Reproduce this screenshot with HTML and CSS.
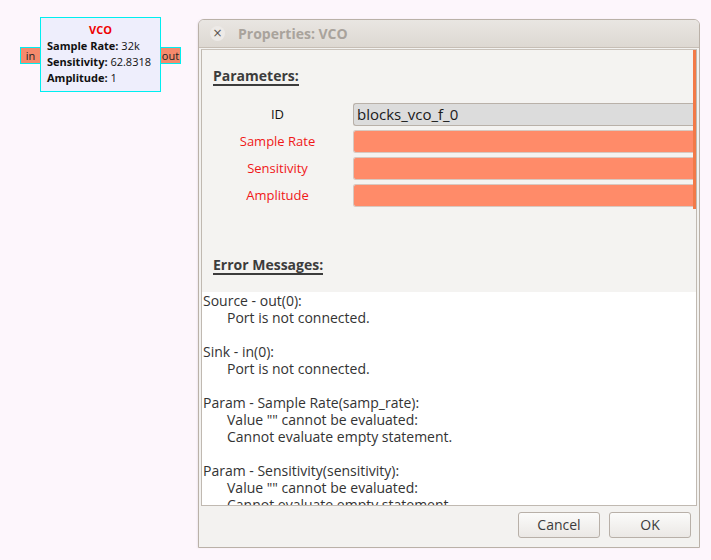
FILE: index.html
```html
<!DOCTYPE html>
<html>
<head>
<meta charset="utf-8">
<link rel="stylesheet" href="styles.css">
</head>
<body>
<div class="canvas">
  <div class="block">
    <div class="port port-in">in</div>
    <div class="block-title">VCO</div>
    <div class="block-line"><b>Sample Rate:</b> 32k</div>
    <div class="block-line"><b>Sensitivity:</b> 62.8318</div>
    <div class="block-line"><b>Amplitude:</b> 1</div>
    <div class="port port-out">out</div>
  </div>

  <div class="dialog">
    <div class="titlebar">
      <span class="close">×</span>
      <span class="title">Properties: VCO</span>
    </div>
    <div class="frame">
      <div class="params">
        <div class="scrollmark"></div>
        <div class="heading"><span>Parameters:</span></div>
        <div class="rows">
          <div class="label">ID</div>
          <div class="entry entry-id">blocks_vco_f_0</div>
          <div class="label err">Sample Rate</div>
          <div class="entry entry-err"></div>
          <div class="label err">Sensitivity</div>
          <div class="entry entry-err"></div>
          <div class="label err">Amplitude</div>
          <div class="entry entry-err"></div>
        </div>
        <div class="heading heading-err"><span>Error Messages:</span></div>
      </div>
      <div class="messages">
        <div class="msg">Source - out(0):</div>
        <div class="msg ind">Port is not connected.</div>
        <div class="msg blank"></div>
        <div class="msg">Sink - in(0):</div>
        <div class="msg ind">Port is not connected.</div>
        <div class="msg blank"></div>
        <div class="msg">Param - Sample Rate(samp_rate):</div>
        <div class="msg ind">Value "" cannot be evaluated:</div>
        <div class="msg ind">Cannot evaluate empty statement.</div>
        <div class="msg blank"></div>
        <div class="msg">Param - Sensitivity(sensitivity):</div>
        <div class="msg ind">Value "" cannot be evaluated:</div>
        <div class="msg ind">Cannot evaluate empty statement.</div>
      </div>
    </div>
    <div class="buttons">
      <div class="btn">Cancel</div>
      <div class="btn">OK</div>
    </div>
  </div>
</div>
</body>
</html>
```

FILE: styles.css
```css
html, body {
  margin: 0;
  padding: 0;
}
body {
  background: #fdf6fc;
  width: 711px;
  height: 560px;
  overflow: hidden;
  font-family: "Open Sans", "Liberation Sans", sans-serif;
}
.canvas {
  position: relative;
  width: 711px;
  height: 560px;
}

/* flow-graph block */
.block {
  position: absolute;
  left: 40px;
  top: 17px;
  width: 121px;
  height: 75px;
  box-sizing: border-box;
  border: 1px solid #00eef0;
  background: #eeeefc;
  padding: 3px 0 0 6px;
  font-size: 11px;
  color: #111;
}
.block-title {
  color: #ee0000;
  font-weight: bold;
  text-align: center;
  line-height: 17px;
  padding-right: 6px;
}
.block-line {
  line-height: 16px;
  white-space: nowrap;
}
.block-line b {
  font-weight: bold;
}
.port {
  position: absolute;
  top: 29px;
  height: 17px;
  box-sizing: border-box;
  border: 1px solid #00eef0;
  background: #f58a6c;
  font-size: 11px;
  line-height: 15px;
  color: #222;
  text-align: center;
}
.port-in {
  left: -21px;
  width: 21px;
}
.port-out {
  right: -21px;
  width: 21px;
}

/* dialog window */
.dialog {
  position: absolute;
  left: 198px;
  top: 19px;
  width: 502px;
  height: 529px;
  box-sizing: border-box;
  border: 1px solid #bab1a8;
  border-radius: 6px 6px 0 0;
  background: #f3f2f0;
  display: flex;
  flex-direction: column;
  box-shadow: -1px 0 2px rgba(0,0,0,0.06);
}
.titlebar {
  height: 27px;
  flex: none;
  background: linear-gradient(#e9e6e2, #ddd8d2);
  border-bottom: 1px solid #c6beb5;
  border-radius: 5px 5px 0 0;
  display: flex;
  align-items: center;
}
.close {
  width: 15px;
  height: 15px;
  margin-left: 11px;
  border-radius: 50%;
  background: #edeae7;
  color: #5a5550;
  font-size: 12px;
  line-height: 14px;
  text-align: center;
  font-family: "DejaVu Sans", sans-serif;
}
.title {
  margin-left: 13px;
  font-weight: bold;
  font-size: 14px;
  color: #a9a39c;
}
.frame {
  margin: 1px 2px 0 2px;
  height: 457px;
  flex: none;
  box-sizing: border-box;
  border: 1px solid #c0b9b1;
  border-top-color: #c9c2ba;
  display: flex;
  flex-direction: column;
  overflow: hidden;
}
.params {
  position: relative;
  flex: none;
  height: 242px;
  box-sizing: border-box;
  background: #f4f3f1;
  padding-top: 14px;
}
.scrollmark {
  position: absolute;
  right: 0;
  top: 0;
  width: 3px;
  height: 159px;
  background: #f27a48;
}
.heading {
  padding-left: 11px;
  height: 19px;
}
.heading span {
  display: inline-block;
  font-weight: bold;
  font-size: 14px;
  line-height: 17px;
  color: #3c3c3c;
  border-bottom: 2px solid #3c3c3c;
}
.heading-err {
  margin-top: 46px;
}
.rows {
  margin-top: 20px;
  display: grid;
  grid-template-columns: 151px 1fr;
  grid-auto-rows: 23px;
  row-gap: 4px;
}
.label {
  font-size: 13px;
  line-height: 22px;
  text-align: center;
  color: #111;
}
.label.err {
  color: #f01818;
}
.entry {
  box-sizing: border-box;
  border-radius: 3px 0 0 3px;
  height: 23px;
}
.entry-id {
  background: #dcdcdc;
  border: 1px solid #b9b1a9;
  border-right: none;
  font-size: 15px;
  line-height: 20px;
  padding-left: 3px;
  color: #1a1a1a;
}
.entry-err {
  background: #ff8b69;
  border: 1px solid #d8c8c0;
  border-right: none;
}
.messages {
  flex: 1;
  background: #ffffff;
  padding: 0 0 0 1px;
  overflow: hidden;
  font-size: 14px;
  color: #333;
}
.msg {
  line-height: 17px;
  height: 17px;
  white-space: nowrap;
}
.msg.ind {
  padding-left: 24px;
}
.buttons {
  flex: 1;
  display: flex;
  justify-content: flex-end;
  align-items: flex-start;
  gap: 9px;
  padding: 6px 8px 0 0;
}
.btn {
  width: 82px;
  height: 26px;
  box-sizing: border-box;
  border: 1px solid #b8b0a8;
  border-radius: 3px;
  background: linear-gradient(#fbfbfa, #ebe8e5);
  font-size: 14px;
  line-height: 24px;
  text-align: center;
  color: #3c3c3c;
}
```
